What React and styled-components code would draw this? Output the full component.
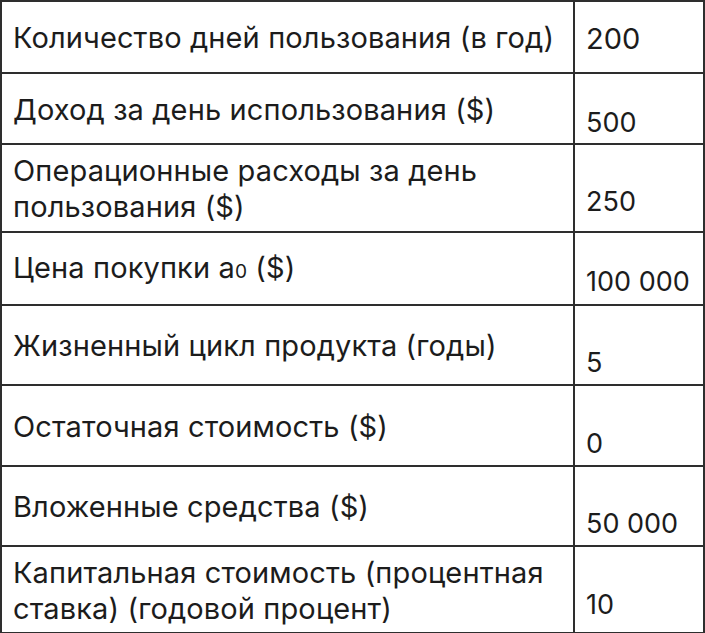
import React from "react";
import styled, { createGlobalStyle } from "styled-components";

const GlobalStyle = createGlobalStyle`
  html, body {
    margin: 0;
    padding: 0;
    background: #ffffff;
  }
  body {
    font-family: Inter, "Noto Sans", sans-serif;
    color: #1c1c1c;
  }
`;

const rows = [
  { label: "Количество дней пользования (в год)", value: "200", height: 72, lead: true },
  { label: "Доход за день использования ($)", value: "500", height: 71, pad: 5 },
  { label: "Операционные расходы за день пользования ($)", value: "250", height: 88, pad: 14 },
  { label: "Цена покупки", sub: true, value: "100 000", height: 73, pad: 7 },
  { label: "Жизненный цикл продукта (годы)", value: "5", height: 80, pad: 6 },
  { label: "Остаточная стоимость ($)", value: "0", height: 81, pad: 6 },
  { label: "Вложенные средства ($)", value: "50 000", height: 80, pad: 6 },
  { label: "Капитальная стоимость (процентная ставка) (годовой процент)", value: "10", height: 87, pad: 12 },
];

const App = () => {
  return (
    <>
      <GlobalStyle />
      <Table>
        <colgroup>
          <col style={{ width: 573 }} />
          <col />
        </colgroup>
        <tbody>
          {rows.map((r) => (
            <Row key={r.label} $height={r.height}>
              <Label>
                {r.sub ? (
                  <>
                    {r.label} а<Sub>0</Sub> ($)
                  </>
                ) : (
                  r.label
                )}
              </Label>
              <Value $lead={r.lead} $pad={r.pad}>
                {r.value}
              </Value>
            </Row>
          ))}
        </tbody>
      </Table>
    </>
  );
};

const Table = styled.table`
  width: 705px;
  border-collapse: collapse;
  table-layout: fixed;
  border: 2px solid #2e2e2e;
`;

const Row = styled.tr`
  height: ${(p) => p.$height}px;
  td {
    border: 2px solid #2e2e2e;
  }
`;

const Label = styled.td`
  padding: 2px 14px 0 11px;
  font-size: 29px;
  line-height: 36px;
  vertical-align: middle;
  letter-spacing: 0.12px;
`;

const Sub = styled.span`
  font-size: 0.66em;
  letter-spacing: 0;
`;

const Value = styled.td`
  padding: ${(p) => (p.$lead ? "4px 0 0 11px" : `0 0 ${p.$pad}px 11px`)};
  font-size: ${(p) => (p.$lead ? "29px" : "27px")};
  line-height: 30px;
  vertical-align: ${(p) => (p.$lead ? "middle" : "bottom")};
  white-space: nowrap;
`;

export default App;
